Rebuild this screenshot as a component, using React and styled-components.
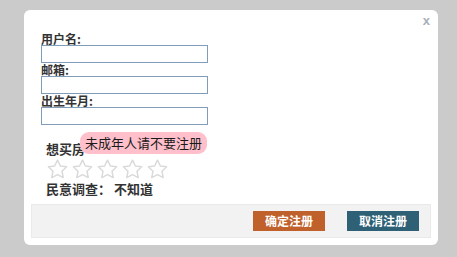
import React from "react";
import styled, { createGlobalStyle } from "styled-components";

const Global = createGlobalStyle`
  html, body { margin: 0; padding: 0; background: #cbcbcb; }
  body { font-family: "Noto Sans CJK SC", "Liberation Sans", sans-serif; }
`;

const Page = styled.div`
  width: 457px;
  height: 257px;
  padding: 10px 0 0 24px;
  box-sizing: border-box;
`;

const Dialog = styled.div`
  position: relative;
  width: 414px;
  height: 235px;
  background: #fff;
  border-radius: 6px;
  box-sizing: border-box;
  padding-top: 22px;
  display: flex;
  flex-direction: column;
`;

const Close = styled.span`
  position: absolute;
  top: 3px;
  right: 8px;
  font-family: "Liberation Sans", sans-serif;
  font-weight: bold;
  font-size: 13px;
  color: #a9afba;
`;

const Fields = styled.div`
  padding-left: 17px;
  display: flex;
  flex-direction: column;
`;

const Label = styled.label`
  display: block;
  height: 13px;
  line-height: 13px;
  font-size: 12px;
  font-weight: bold;
  color: #333;
`;

const Input = styled.input`
  display: block;
  width: 167px;
  height: 18px;
  box-sizing: border-box;
  border: 1px solid #7f9db9;
  margin: 0;
  padding: 0 2px;
  background: #fff;
`;

const Extra = styled.div`
  position: relative;
  padding: 16px 0 0 22px;
  display: flex;
  flex-direction: column;
`;

const Text = styled.div`
  font-size: 13px;
  line-height: 16px;
  height: 16px;
  font-weight: bold;
  color: #333;
`;

const Stars = styled.div`
  display: flex;
  gap: 4px;
  margin: 2px 0 1px 1px;
`;

const Tip = styled.div`
  position: absolute;
  left: 56px;
  top: 7px;
  height: 22px;
  line-height: 22px;
  padding: 0 5px;
  background: pink;
  border-radius: 9px;
  font-size: 13px;
  color: #1a1a1a;
  white-space: nowrap;
`;

const Footer = styled.div`
  margin: auto 7px 7px 7px;
  height: 34px;
  box-sizing: border-box;
  background: #f2f2f2;
  border: 1px solid #eaeaea;
  display: flex;
  justify-content: flex-end;
  align-items: center;
  gap: 22px;
  padding-right: 11px;
`;

const Button = styled.button`
  width: 72px;
  height: 20px;
  border: none;
  margin: 0;
  padding: 0;
  background: ${(p) => p.$bg};
  color: #fff;
  font-family: "Noto Sans CJK SC", sans-serif;
  font-size: 12px;
  font-weight: bold;
  line-height: 20px;
`;

const Star = () => (
  <svg width="21" height="21" viewBox="0 0 21 21">
    <path
      d="M10.5 1.2 L13.4 7 L19.6 7.8 L15 12.2 L16.2 18.6 L10.5 15.6 L4.8 18.6 L6 12.2 L1.4 7.8 L7.6 7 Z"
      fill="#fff"
      stroke="#dadada"
      strokeWidth="1.5"
      strokeLinejoin="round"
    />
  </svg>
);

export default function App() {
  return (
    <>
      <Global />
      <Page>
        <Dialog>
          <Close>x</Close>
          <Fields>
            <Label>用户名:</Label>
            <Input />
            <Label>邮箱:</Label>
            <Input />
            <Label>出生年月:</Label>
            <Input />
          </Fields>
          <Extra>
            <Text>想买房</Text>
            <Stars>
              {[0, 1, 2, 3, 4].map((i) => (
                <Star key={i} />
              ))}
            </Stars>
            <Text>民意调查： 不知道</Text>
            <Tip>未成年人请不要注册</Tip>
          </Extra>
          <Footer>
            <Button $bg="#c0602a">确定注册</Button>
            <Button $bg="#2e6176">取消注册</Button>
          </Footer>
        </Dialog>
      </Page>
    </>
  );
}
